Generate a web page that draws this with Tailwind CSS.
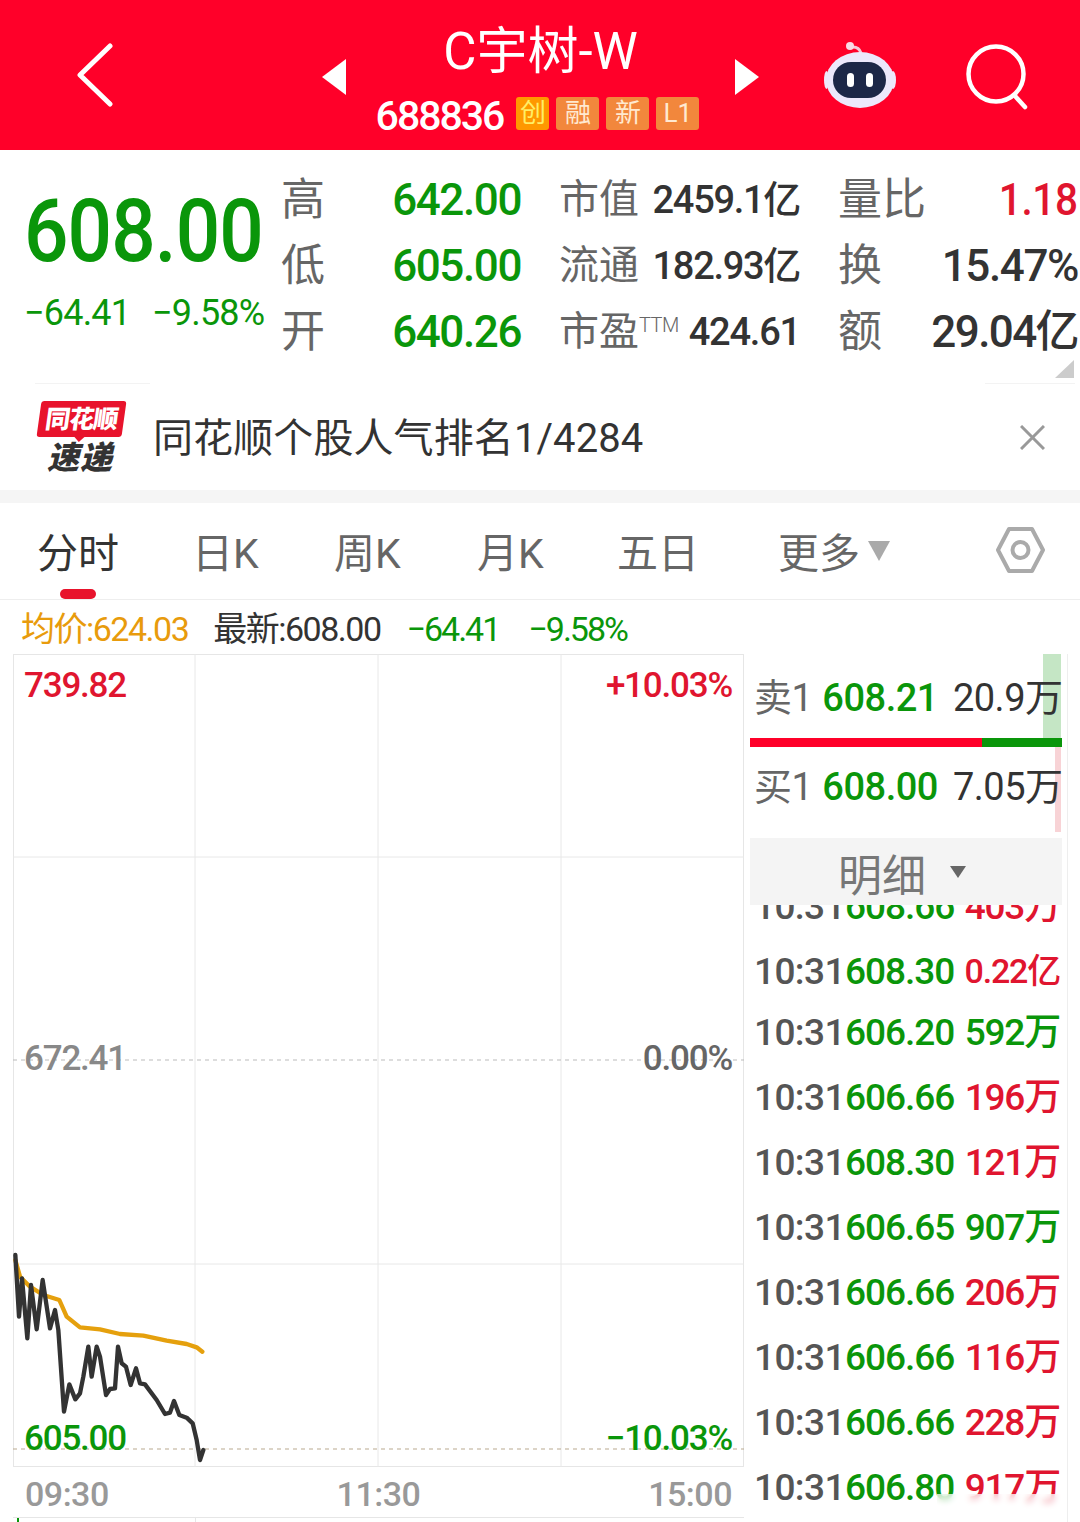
<!DOCTYPE html>
<html lang="zh-CN">
<head>
  <meta charset="UTF-8">
  <title>C宇树-W</title>
  <meta name="viewport" content="width=device-width, initial-scale=1.0">
  <script src="https://cdn.jsdelivr.net/npm/@tailwindcss/browser@4"></script>
</head>
<body class="bg-white font-['Roboto','Noto_Sans_CJK_SC',sans-serif] text-[#333] w-[1080px] h-[1522px] overflow-hidden">

  <!-- HEADER -->
  <header class="h-[150px] bg-[#ff0029] text-white flex items-center relative">
    <svg class="ml-[76px] w-[40px] h-[64px]" viewBox="0 0 40 64" fill="none" stroke="white" stroke-width="5" stroke-linecap="round" stroke-linejoin="round"><path d="M34 3 L4 32 L34 61"/></svg>
    <svg class="ml-[206px] w-[24px] h-[36px] mt-[4px]" viewBox="0 0 24 36" fill="white"><path d="M24 0 V36 L0 18 Z"/></svg>
    <div class="w-[389px] flex flex-col items-center">
      <div class="text-[51px] leading-[56px] mt-[5px]">C宇树-W</div>
      <div class="flex items-center mt-[16px] h-[36px] -ml-[6px]">
        <span class="text-[41px] font-medium tracking-[-2px] mr-[13px] mt-[6px]">688836</span>
        <span class="w-[33px] h-[33px] rounded-[3px] bg-[#ff9800] text-[#ffee66] text-[26px] flex items-center justify-center mr-[7px]">创</span>
        <span class="w-[43px] h-[33px] rounded-[3px] bg-[#f2873c] text-[#ffe9d0] text-[26px] flex items-center justify-center mr-[7px]">融</span>
        <span class="w-[43px] h-[33px] rounded-[3px] bg-[#f2873c] text-[#ffe9d0] text-[26px] flex items-center justify-center mr-[7px]">新</span>
        <span class="w-[43px] h-[33px] rounded-[3px] bg-[#f2873c] text-[#ffe9d0] text-[26px] flex items-center justify-center">L1</span>
      </div>
    </div>
    <svg class="w-[24px] h-[36px] mt-[4px]" viewBox="0 0 24 36" fill="white"><path d="M0 0 V36 L24 18 Z"/></svg>
    <svg class="ml-[64px] w-[74px] h-[70px] mt-[4px]" viewBox="0 0 74 70">
      <path d="M30 5 C35 5 37 8 38 11" fill="none" stroke="#f6c9d8" stroke-width="3"/>
      <circle cx="27" cy="4" r="4" fill="#f9dbe5"/>
      <ellipse cx="3.500" cy="38" rx="2.500" ry="9" fill="#efe8fb"/>
      <ellipse cx="70" cy="38" rx="3" ry="9" fill="#efe8fb"/>
      <ellipse cx="37" cy="38" rx="34" ry="28" fill="#ece8fb"/>
      <rect x="10" y="20" width="53" height="36" rx="18" fill="#1c2747"/>
      <rect x="24" y="31" width="7" height="14" rx="3.5" fill="white"/>
      <rect x="43" y="31" width="7" height="14" rx="3.5" fill="white"/>
    </svg>
    <svg class="ml-[68px] w-[64px] h-[68px] mt-[2px]" viewBox="0 0 64 68" fill="none" stroke="white" stroke-width="4.5" stroke-linecap="round"><circle cx="31" cy="32" r="27.5"/><path d="M50 54 L60 65"/></svg>
  </header>

  <!-- QUOTE -->
  <section class="h-[230px] flex relative">
    <div class="w-[281px] pl-[24px]">
      <div class="text-[87px] leading-[87px] font-medium text-[#0a960a] mt-[38px] tracking-[-1px] origin-left scale-x-[0.9] w-[270px]">608.00</div>
      <div class="flex text-[36px] leading-[40px] text-[#0a960a] mt-[18px] tracking-[-0.8px]">
        <span class="w-[128px]">−64.41</span><span>−9.58%</span>
      </div>
    </div>
    <div class="grid grid-cols-[240px_241px_240px] grid-rows-[66px_66px_66px] gap-x-[38px] pt-[17px] text-[44px]">
      <div class="flex justify-between items-center"><span class="text-[#666]">高</span><span class="font-medium text-[#0a960a] text-[44px] tracking-[-1.4px]">642.00</span></div>
      <div class="flex justify-between items-center"><span class="text-[#666] text-[40px]">市值</span><span class="text-[38px] font-medium tracking-[-1.3px]">2459.1亿</span></div>
      <div class="flex justify-between items-center"><span class="text-[#666]">量比</span><span class="font-medium text-[#e0152f] text-[44px] tracking-[-0.4px] scale-x-[0.92] origin-right">1.18</span></div>

      <div class="flex justify-between items-center"><span class="text-[#666]">低</span><span class="font-medium text-[#0a960a] text-[44px] tracking-[-1.4px]">605.00</span></div>
      <div class="flex justify-between items-center"><span class="text-[#666] text-[40px]">流通</span><span class="text-[38px] font-medium tracking-[-1.3px]">182.93亿</span></div>
      <div class="flex justify-between items-center"><span class="text-[#666]">换</span><span class="font-medium text-[44px] tracking-[-1.4px]">15.47%</span></div>

      <div class="flex justify-between items-center"><span class="text-[#666]">开</span><span class="font-medium text-[#0a960a] text-[44px] tracking-[-1.4px]">640.26</span></div>
      <div class="flex justify-between items-center"><span class="text-[#666] text-[40px] flex">市盈<span class="text-[20px] leading-[30px] mt-[8px] font-light tracking-[-0.5px]">TTM</span></span><span class="text-[38px] font-medium tracking-[-1.2px]">424.61</span></div>
      <div class="flex justify-between items-center"><span class="text-[#666]">额</span><span class="font-medium text-[44px] tracking-[-1.6px]">29.04亿</span></div>
    </div>
    <div class="absolute left-[1055px] top-[210px] w-[19px] h-[18px] bg-[#ccc] [clip-path:polygon(100%_0,100%_100%,0_100%)]"></div>
  </section>

  <!-- BANNER -->
  <section class="h-[110px] flex items-center relative">
    <div class="absolute left-[35px] top-[3px] w-[115px] h-px bg-[#f3f3f3]"></div>
    <div class="absolute left-[985px] top-[3px] w-[90px] h-px bg-[#f3f3f3]"></div>
    <div class="ml-[36px] w-[90px] h-[72px] flex flex-col items-center mt-[3px]">
      <div class="w-[85px] h-[37px] bg-[#e8132c] rounded-[3px] -skew-x-[8deg] flex items-center justify-center relative">
        <span class="text-white text-[25px] leading-none font-black tracking-[-1px]">同花顺</span>
        <span class="absolute left-[37px] bottom-[-5px] w-[12px] h-[6px] bg-[#e8132c] [clip-path:polygon(0_0,100%_0,50%_100%)]"></span>
      </div>
      <span class="text-[#333] text-[32px] leading-[30px] font-black italic tracking-[1px] mt-[6px] -ml-[2px]">速递</span>
    </div>
    <div class="ml-[27px] mt-[8px] text-[40px] tracking-[0.1px]">同花顺个股人气排名1/4284</div>
    <svg class="absolute left-[1020px] top-[45px] w-[25px] h-[25px]" viewBox="0 0 25 25" stroke="#999" stroke-width="3"><path d="M1 1 L24 24 M24 1 L1 24"/></svg>
  </section>

  <div class="h-[13px] bg-[#f5f5f5]"></div>

  <!-- TABS -->
  <nav class="h-[97px] border-b border-[#eee] flex items-center relative text-[41px] text-[#666]">
    <span class="absolute left-[37px] top-[21px] text-[#333]">分时</span>
    <span class="absolute left-[60px] top-[86px] w-[36px] h-[10px] rounded-[5px] bg-[#e8132c]"></span>
    <span class="absolute left-[192px] top-[21px]">日K</span>
    <span class="absolute left-[334px] top-[21px]">周K</span>
    <span class="absolute left-[477px] top-[21px]">月K</span>
    <span class="absolute left-[617px] top-[21px]">五日</span>
    <span class="absolute left-[778px] top-[21px]">更多</span>
    <svg class="absolute left-[868px] top-[38px] w-[22px] h-[20px]" viewBox="0 0 22 20" fill="#aaa"><path d="M0 0 H22 L11 20 Z"/></svg>
    <svg class="absolute left-[996px] top-[23px] w-[49px] h-[48px]" viewBox="0 0 49 48" fill="none" stroke="#aaa" stroke-width="4"><path d="M13 3 H36 L47 24 L36 45 H13 L2 24 Z" stroke-linejoin="round"/><circle cx="24.500" cy="24" r="8"/></svg>
  </nav>

  <!-- CHART + DETAIL -->
  <section class="flex">
    <div class="w-[745px] pl-[13px] shrink-0">
      <div class="h-[54px] flex items-center text-[34px] tracking-[-1.5px] -ml-[13px] pt-[4px]">
        <span class="ml-[21px] text-[#e89b0c]">均价:624.03</span>
        <span class="ml-[25px]">最新:608.00</span>
        <span class="ml-[26px] text-[#0a960a] tracking-[-2px]">−64.41</span>
        <span class="ml-[29px] text-[#0a960a] tracking-[-2px]">−9.58%</span>
      </div>
      <div class="relative w-[731px] h-[813px] text-[35px] tracking-[-1.2px] font-medium">
        <svg class="absolute inset-0" width="731" height="813" viewBox="0 0 2193 2439" fill="none">
          <rect x="1.500" y="1.500" width="2190" height="2436" stroke="#e6e6e6" stroke-width="3"/>
          <path d="M546 0 V2439 M1095 0 V2439 M1644 0 V2439 M0 609 H2193 M0 1830 H2193" stroke="#e8e8e8" stroke-width="3"/>
          <path d="M0 1218 H2193" stroke="#bbb" stroke-width="3" stroke-dasharray="12 12"/>
          <path d="M0 2385 H2193" stroke="#b9a98f" stroke-width="3" stroke-dasharray="12 12"/>
          <g transform="translate(-39,1758)" stroke-linejoin="round" stroke-linecap="round" stroke-width="13">
            <polyline stroke="#e5a00d" points="46,60 60,110 90,140 130,165 178,180 200,230 240,262 300,268 360,282 430,287 500,302 560,312 590,322 607,335"/>
            <polyline stroke="#333" points="46,45 57,230 66,115 82,295 93,135 110,268 128,120 150,265 165,210 175,270 192,515 208,433 226,478 240,460 250,410 265,320 275,410 290,320 300,350 318,465 330,447 345,445 354,320 365,370 378,380 392,435 408,385 420,430 435,433 470,480 495,522 510,518 522,483 538,525 560,533 578,550 590,600 600,660 610,630"/>
          </g>
        </svg>
        <span class="absolute left-[11px] top-[6px] text-[#e0152f]">739.82</span>
        <span class="absolute right-[12px] top-[6px] text-[#e0152f]">+10.03%</span>
        <span class="absolute left-[11px] top-[379px] text-[#888]">672.41</span>
        <span class="absolute right-[12px] top-[379px] text-[#666]">0.00%</span>
        <span class="absolute left-[11px] top-[759px] text-[#0a960a]">605.00</span>
        <span class="absolute right-[12px] top-[759px] text-[#0a960a]">−10.03%</span>
      </div>
      <div class="relative w-[731px] h-[50px] flex justify-between items-center px-[12px] pt-[4px] text-[34px] text-[#999] tracking-[-0.5px] font-medium">
        <span>09:30</span><span>11:30</span><span>15:00</span>
      </div>
      <div class="relative w-[731px] h-[5px] border-t border-[#e6e6e6]">
        <span class="absolute left-[4px] top-0 w-[2px] h-[5px] bg-[#0a960a]"></span>
        <span class="absolute left-[182px] top-0 w-px h-[5px] bg-[#e6e6e6]"></span>
      </div>
    </div>

    <div class="relative w-[323px] h-[922px] border-r border-[#eee] mt-[54px] overflow-hidden">
      <div class="h-[84px] relative flex items-center text-[38px] tracking-[-0.5px] pl-[9px] pt-[4px] whitespace-nowrap">
        <span class="absolute right-[6px] top-0 w-[18px] h-[84px] bg-[#c5e6c5]"></span>
        <span class="relative text-[#666]">卖1</span>
        <span class="relative ml-[10px] text-[#0a960a] font-medium">608.21</span>
        <span class="relative ml-[15px]">20.9万</span>
      </div>
      <div class="ml-[5px] w-[312px] h-[9px] flex">
        <span class="w-[232px] bg-[#ff0029]"></span><span class="w-[80px] bg-[#0a960a]"></span>
      </div>
      <div class="h-[85px] relative flex items-center text-[38px] tracking-[-0.5px] pl-[9px] pb-[4px] whitespace-nowrap">
        <span class="absolute right-[6px] top-0 w-[6px] h-[85px] bg-[#f8d3d6]"></span>
        <span class="relative text-[#666]">买1</span>
        <span class="relative ml-[10px] text-[#0a960a] font-medium">608.00</span>
        <span class="relative ml-[15px]">7.05万</span>
      </div>
      <div class="relative z-10 mt-[6px] ml-[5px] w-[312px] h-[67px] bg-[#f4f4f4] flex items-center justify-center text-[44px] text-[#777]">
        <span class="ml-[-8px] mt-[10px]">明细</span>
        <svg class="ml-[24px] w-[16px] h-[12px]" viewBox="0 0 16 12" fill="#666"><path d="M0 0 H16 L8 12 Z"/></svg>
      </div>
      <div class="pl-[9px] pr-[7px] text-[37px] tracking-[-0.6px] font-medium -mt-[31px] whitespace-nowrap">
        <div class="h-[65px] flex items-center justify-between"><span class="flex"><span class="text-[#555]">10:31</span><span class="text-[#0a960a] tracking-[-1px]">608.66</span></span><span class="text-[#e0152f] tracking-[-1.2px]">403万</span></div>
        <div class="h-[65px] flex items-center justify-between"><span class="flex"><span class="text-[#555]">10:31</span><span class="text-[#0a960a] tracking-[-1px]">608.30</span></span><span class="text-[#e0152f] text-[34px] tracking-[-1.2px]">0.22亿</span></div>
        <div class="h-[65px] flex items-center justify-between -mt-[4px]"><span class="flex"><span class="text-[#555]">10:31</span><span class="text-[#0a960a] tracking-[-1px]">606.20</span></span><span class="text-[#0a960a] tracking-[-1.2px]">592万</span></div>
        <div class="h-[65px] flex items-center justify-between"><span class="flex"><span class="text-[#555]">10:31</span><span class="text-[#0a960a] tracking-[-1px]">606.66</span></span><span class="text-[#e0152f] tracking-[-1.2px]">196万</span></div>
        <div class="h-[65px] flex items-center justify-between"><span class="flex"><span class="text-[#555]">10:31</span><span class="text-[#0a960a] tracking-[-1px]">608.30</span></span><span class="text-[#e0152f] tracking-[-1.2px]">121万</span></div>
        <div class="h-[65px] flex items-center justify-between"><span class="flex"><span class="text-[#555]">10:31</span><span class="text-[#0a960a] tracking-[-1px]">606.65</span></span><span class="text-[#0a960a] tracking-[-1.2px]">907万</span></div>
        <div class="h-[65px] flex items-center justify-between"><span class="flex"><span class="text-[#555]">10:31</span><span class="text-[#0a960a] tracking-[-1px]">606.66</span></span><span class="text-[#e0152f] tracking-[-1.2px]">206万</span></div>
        <div class="h-[65px] flex items-center justify-between"><span class="flex"><span class="text-[#555]">10:31</span><span class="text-[#0a960a] tracking-[-1px]">606.66</span></span><span class="text-[#e0152f] tracking-[-1.2px]">116万</span></div>
        <div class="h-[65px] flex items-center justify-between"><span class="flex"><span class="text-[#555]">10:31</span><span class="text-[#0a960a] tracking-[-1px]">606.66</span></span><span class="text-[#e0152f] tracking-[-1.2px]">228万</span></div>
        <div class="h-[65px] flex items-center justify-between"><span class="flex"><span class="text-[#555]">10:31</span><span class="text-[#0a960a] tracking-[-1px]">606.80</span></span><span class="text-[#e0152f] tracking-[-1.2px]">917万</span></div>
      </div>
      <div class="absolute left-[192px] top-[840px] w-[134px] h-[26px] bg-white/70 backdrop-blur-[3px]"></div>
    </div>
  </section>
</body>
</html>
